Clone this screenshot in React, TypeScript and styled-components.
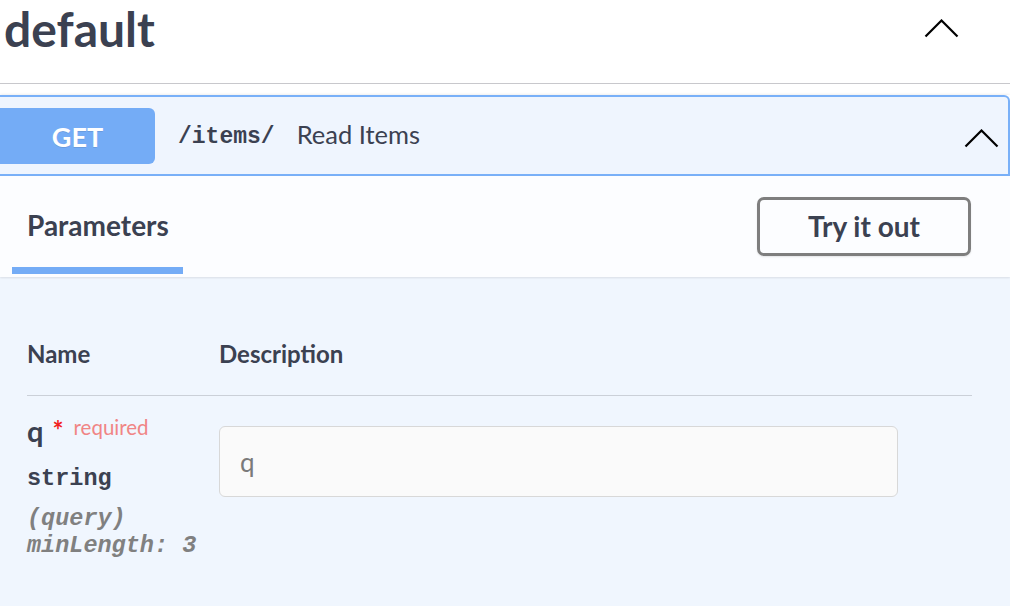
import React from "react";
import styled, { createGlobalStyle } from "styled-components";

const Global = createGlobalStyle`
  html, body { margin: 0; padding: 0; background: #ffffff; }
  body { font-family: Lato, "Noto Sans", sans-serif; color: #3b4151; overflow: hidden; }
  * { box-sizing: border-box; }
`;

const Page = styled.div`
  width: 1010px;
  height: 606px;
  overflow: hidden;
  display: flex;
  flex-direction: column;
`;

const TagHeader = styled.div`
  height: 84px;
  display: flex;
  align-items: flex-start;
  justify-content: space-between;
  padding: 0 51px 0 4px;
  border-bottom: 1.5px solid #c8c8cc;
`;

const TagTitle = styled.h3`
  margin: 0;
  font-size: 48px;
  line-height: 58px;
  font-weight: 700;
  color: #3b4151;
`;

const Chevron = styled.svg<{ $top: number }>`
  margin-top: ${(p) => p.$top}px;
  flex: none;
`;

const OpBlock = styled.div`
  margin-top: 11px;
  display: flex;
  flex-direction: column;
  flex: 1;
  box-shadow: 0 0 3px rgba(0, 0, 0, 0.12);
`;

const Summary = styled.div`
  height: 81px;
  display: flex;
  align-items: center;
  background: #eff5fe;
  border-top: 2px solid #79b0f8;
  border-bottom: 2px solid #79b0f8;
  border-right: 2px solid #79b0f8;
  border-top-right-radius: 6px;
  padding-right: 9px;
`;

const Method = styled.span`
  width: 155px;
  height: 56px;
  margin-top: 1px;
  display: flex;
  align-items: center;
  justify-content: center;
  background: #74acf6;
  border-radius: 0 6px 6px 0;
  color: #ffffff;
  font-size: 27px;
  font-weight: 700;
  text-shadow: 0 1px 0 rgba(0, 0, 0, 0.1);
  flex: none;
`;

const Path = styled.span`
  margin-left: 23px;
  margin-top: 2px;
  font-family: "Liberation Mono", monospace;
  font-weight: 700;
  font-size: 23px;
  color: #3b4151;
`;

const Description = styled.span`
  margin-left: 22px;
  margin-bottom: 4px;
  font-size: 25.5px;
  color: #3b4151;
  flex: 1;
`;

const SectionHeader = styled.div`
  height: 101px;
  display: flex;
  align-items: stretch;
  justify-content: space-between;
  padding: 0 39px 3px 12px;
  background: #fcfdff;
  box-shadow: 0 1px 2px rgba(0, 0, 0, 0.1);
  position: relative;
  z-index: 1;
`;

const Tab = styled.div`
  display: flex;
  flex-direction: column;
  justify-content: flex-end;
`;

const TabLabel = styled.span`
  padding: 0 14px 0 15px;
  font-size: 28px;
  line-height: 34px;
  font-weight: 700;
  color: #3b4151;
`;

const TabUnderline = styled.div`
  margin-top: 25px;
  height: 7px;
  background: #74acf6;
`;

const TryButton = styled.button`
  align-self: center;
  margin-top: 2px;
  width: 214px;
  height: 59px;
  border: 3px solid #7e7e7e;
  border-radius: 7px;
  background: transparent;
  font-family: Lato, "Noto Sans", sans-serif;
  font-size: 28px;
  font-weight: 700;
  color: #3b4151;
  box-shadow: 0 1px 2px rgba(0, 0, 0, 0.1);
`;

const Body = styled.div`
  flex: 1;
  background: #f0f6fe;
  padding: 62px 38px 0 27px;
`;

const HeadRow = styled.div`
  display: grid;
  grid-template-columns: 192px 1fr;
  padding-bottom: 27px;
  border-bottom: 1.5px solid #cbd0d8;
`;

const HeadCell = styled.span`
  font-size: 24px;
  line-height: 29px;
  font-weight: 700;
  color: #3b4151;
`;

const ParamRow = styled.div`
  display: grid;
  grid-template-columns: 192px 1fr;
  padding-top: 22px;
`;

const NameCell = styled.div`
  display: flex;
  flex-direction: column;
`;

const NameLine = styled.div`
  display: flex;
  align-items: flex-start;
  margin-top: -4px;
`;

const ParamName = styled.span`
  font-size: 29px;
  line-height: 34px;
  font-weight: 700;
  color: #3b4151;
`;

const Star = styled.span`
  margin-left: 9px;
  margin-top: 3px;
  font-size: 26px;
  line-height: 26px;
  font-weight: 700;
  color: #f21d1d;
`;

const Required = styled.span`
  margin-left: 10px;
  margin-top: 2px;
  font-size: 20.5px;
  line-height: 22px;
  color: #f08585;
`;

const Mono = styled.span<{ $muted?: boolean; $gap?: number }>`
  font-family: "Liberation Mono", monospace;
  font-weight: 700;
  font-size: 23.5px;
  line-height: 27px;
  margin-top: ${(p) => p.$gap ?? 0}px;
  color: ${(p) => (p.$muted ? "#808080" : "#3b4151")};
  font-style: ${(p) => (p.$muted ? "italic" : "normal")};
  white-space: pre;
`;

const InputCell = styled.div`
  padding-top: 8px;
`;

const Input = styled.input`
  width: 679px;
  height: 71px;
  border: 1.5px solid #d8d8d8;
  border-radius: 6px;
  background: #fafafa;
  padding: 0 20px;
  font-family: Lato, "Noto Sans", sans-serif;
  font-size: 26px;
  color: #3b4151;
  outline: none;
  &::placeholder { color: #7a7a7a; }
`;

const Up = ({ top }: { top: number }) => (
  <Chevron $top={top} width="35" height="19" viewBox="0 0 35 19">
    <polyline points="1.5,17.5 17.5,1.5 33.5,17.5" fill="none" stroke="#000" strokeWidth="2.2" />
  </Chevron>
);

export default function App() {
  return (
    <Page>
      <Global />
      <TagHeader>
        <TagTitle>default</TagTitle>
        <Up top={19} />
      </TagHeader>
      <OpBlock>
        <Summary>
          <Method>GET</Method>
          <Path>/items/</Path>
          <Description>Read Items</Description>
          <Up top={6} />
        </Summary>
        <SectionHeader>
          <Tab>
            <TabLabel>Parameters</TabLabel>
            <TabUnderline />
          </Tab>
          <TryButton>Try it out</TryButton>
        </SectionHeader>
        <Body>
          <HeadRow>
            <HeadCell>Name</HeadCell>
            <HeadCell>Description</HeadCell>
          </HeadRow>
          <ParamRow>
            <NameCell>
              <NameLine>
                <ParamName>q</ParamName>
                <Star>*</Star>
                <Required>required</Required>
              </NameLine>
              <Mono $gap={17}>string</Mono>
              <Mono $muted $gap={13}>(query)</Mono>
              <Mono $muted>minLength: 3</Mono>
            </NameCell>
            <InputCell>
              <Input placeholder="q" />
            </InputCell>
          </ParamRow>
        </Body>
      </OpBlock>
    </Page>
  );
}
